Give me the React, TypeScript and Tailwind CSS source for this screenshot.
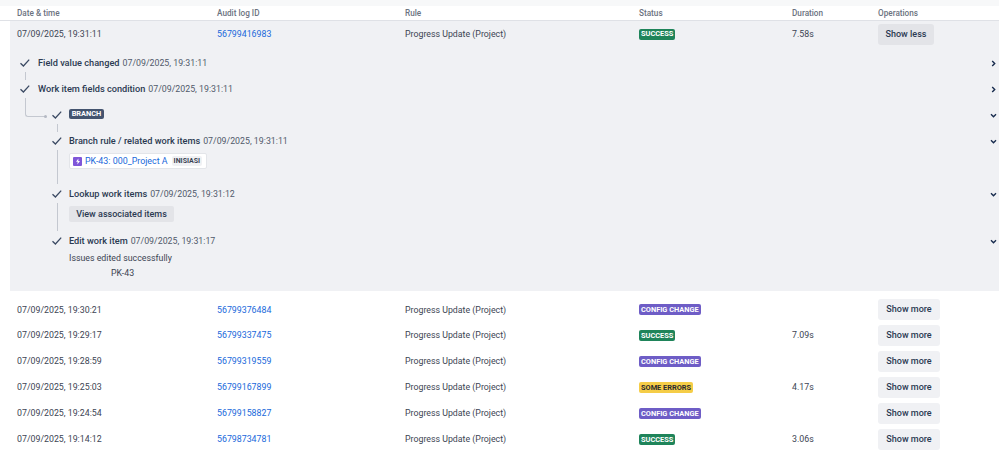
import React from "react";

const cols = "grid grid-cols-[200px_188px_234px_153px_86px_1fr] items-center pl-[17px]";

function Lozenge({ kind }: { kind: "success" | "config" | "errors" }) {
  const cls =
    kind === "success"
      ? "bg-[#1f845a] text-white"
      : kind === "config"
      ? "bg-[#6e5dc6] text-white"
      : "bg-[#f5cd47] text-[#292a2e]";
  const label = kind === "success" ? "SUCCESS" : kind === "config" ? "CONFIG CHANGE" : "SOME ERRORS";
  return (
    <span className={`inline-flex h-[11px] items-center rounded-[2px] px-[2px] text-[7.4px] font-bold leading-none ${cls}`}>
      {label}
    </span>
  );
}

function Check() {
  return (
    <svg width="12" height="10" viewBox="0 0 12 10" fill="none" className="shrink-0">
      <path d="M1.5 5.2 L4.4 8 L10.2 1.6" stroke="#3b4a63" strokeWidth="1.3" />
    </svg>
  );
}

function Chevron({ down }: { down?: boolean }) {
  return (
    <svg width="7" height="7" viewBox="0 0 7 7" fill="none" className="shrink-0">
      <path d={down ? "M1 2.2 L3.5 4.7 L6 2.2" : "M2.2 1 L4.7 3.5 L2.2 6"} stroke="#172b4d" strokeWidth="1.4" />
    </svg>
  );
}

function Step({
  title,
  time,
  line,
  h,
  down,
  nested,
  lineEnd = 3,
  children,
}: {
  title?: React.ReactNode;
  time?: string;
  line?: boolean;
  h: string;
  down?: boolean;
  nested?: boolean;
  lineEnd?: number;
  children?: React.ReactNode;
}) {
  return (
    <div className={`flex ${h}`}>
      <div className="flex w-[20px] shrink-0 flex-col items-center">
        <div className="flex h-[14px] items-center">
          <Check />
        </div>
        {line && <div className="mt-[2px] w-px flex-1 bg-[#c4c8d0]" style={{ marginBottom: lineEnd }} />}
      </div>
      <div className={`${nested ? "ml-[2px] pr-[2px]" : "ml-[3px] pr-[2px]"} min-w-0 flex-1`}>
        <div className="flex h-[14px] items-center justify-between">
          <div>
            {title}
            {time && <span className="ml-[3px] text-[#505a6b]">{time}</span>}
          </div>
          {down !== undefined && <Chevron down={down} />}
        </div>
        {children}
      </div>
    </div>
  );
}

const T = ({ children }: { children: React.ReactNode }) => (
  <span className="text-[9.2px] font-medium text-[#2b3a52]">{children}</span>
);

const rows = [
  ["07/09/2025, 19:30:21", "56799376484", "config", ""],
  ["07/09/2025, 19:29:17", "56799337475", "success", "7.09s"],
  ["07/09/2025, 19:28:59", "56799319559", "config", ""],
  ["07/09/2025, 19:25:03", "56799167899", "errors", "4.17s"],
  ["07/09/2025, 19:24:54", "56799158827", "config", ""],
  ["07/09/2025, 19:14:12", "56798734781", "success", "3.06s"],
] as const;

export default function App() {
  return (
    <div
      className="h-[451px] w-[999px] overflow-hidden bg-white text-[8.8px] leading-none text-[#3c4453]"
      style={{ fontFamily: "Roboto, sans-serif" }}
    >
      <div className="h-[6px] bg-[#f7f8f9]" />
      <div className={`${cols} h-[15px] border-b border-[#dfe1e6] text-[8.2px] font-medium text-[#6b7280]`}>
        <div>Date &amp; time</div>
        <div>Audit log ID</div>
        <div>Rule</div>
        <div>Status</div>
        <div>Duration</div>
        <div>Operations</div>
      </div>

      <div className="ml-[10px] h-[270px] bg-[#f0f1f4]">
        <div className="grid h-[26px] grid-cols-[200px_188px_234px_153px_86px_1fr] items-center pl-[7px]">
          <div>07/09/2025, 19:31:11</div>
          <a className="text-[#1868db]">56799416983</a>
          <div>Progress Update (Project)</div>
          <div>
            <Lozenge kind="success" />
          </div>
          <div>7.58s</div>
          <div>
            <button className="flex h-[21px] w-[56px] items-center justify-center rounded-[3px] bg-[#e3e4e8] text-[9px] font-medium text-[#2b3a52]">
              Show less
            </button>
          </div>
        </div>

        <div className="pl-[5px] pt-[9px]">
          <Step h="h-[26px]" title={<T>Field value changed</T>} time="07/09/2025, 19:31:11" line down={false} lineEnd={2} />
          <div className="relative">
            <Step h="h-[26px]" title={<T>Work item fields condition</T>} time="07/09/2025, 19:31:11" down={false} />
            <div className="absolute left-[10px] top-[16px] h-[19px] w-[20px] rounded-bl-[3px] border-b border-l border-[#c4c8d0]" />
            <div className="absolute left-[29px] top-[33px] h-[3px] w-[3px] rounded-full bg-[#b4b9c3]" />
          </div>
          <div className="pl-[32px]">
            <Step
              nested
              h="h-[26px]"
              title={
                <span className="mt-[-2px] flex h-[10px] w-[35px] items-center justify-center rounded-[2px] bg-[#44546f] text-[7.4px] font-bold text-white">
                  BRANCH
                </span>
              }
              line
              down
              lineEnd={2}
            />
            <Step nested h="h-[53px]" title={<T>Branch rule / related work items</T>} time="07/09/2025, 19:31:11" line down>
              <div className="mt-[5px] inline-flex h-[16px] w-[138px] items-center rounded-[2px] border border-[#e3e5e9] bg-white pl-[3px]">
                <span className="flex h-[9px] w-[9px] shrink-0 items-center justify-center rounded-[1px] bg-[#7f56d9]">
                  <svg width="6" height="7" viewBox="0 0 6 7">
                    <path d="M3.4 0.5 L1 3.8 H2.7 L2.3 6.5 L5 3 H3.3 Z" fill="white" />
                  </svg>
                </span>
                <span className="ml-[3px] whitespace-nowrap text-[8.9px] text-[#1868db]">PK-43: 000_Project A</span>
                <span className="ml-[4px] flex h-[10px] items-center rounded-[2px] bg-[#f0f1f4] px-[2px] text-[7px] font-bold text-[#3c4453]">
                  INISIASI
                </span>
              </div>
            </Step>
            <Step nested h="h-[47px]" title={<T>Lookup work items</T>} time="07/09/2025, 19:31:12" line down>
              <button className="mt-[5px] flex h-[16px] w-[105px] items-center justify-center rounded-[2px] bg-[#e3e4e8] text-[9px] font-medium text-[#2b3a52]">
                View associated items
              </button>
            </Step>
            <Step nested h="h-[50px]" title={<T>Edit work item</T>} time="07/09/2025, 19:31:17" down>
              <div className="mt-[3px] h-[14px] leading-[14px]">Issues edited successfully</div>
              <div className="ml-[42px] mt-[1px] leading-[14px]">PK-43</div>
            </Step>
          </div>
        </div>
      </div>

      <div className="pt-[6px]">
        {rows.map(([d, id, st, dur]) => (
          <div key={id} className={`${cols} h-[25.9px]`}>
            <div>{d}</div>
            <a className="text-[#1868db]">{id}</a>
            <div>Progress Update (Project)</div>
            <div>
              <Lozenge kind={st} />
            </div>
            <div>{dur}</div>
            <div>
              <button className="flex h-[21px] w-[62px] items-center justify-center rounded-[3px] bg-[#f0f1f4] text-[9px] font-medium text-[#2b3a52]">
                Show more
              </button>
            </div>
          </div>
        ))}
      </div>
    </div>
  );
}
